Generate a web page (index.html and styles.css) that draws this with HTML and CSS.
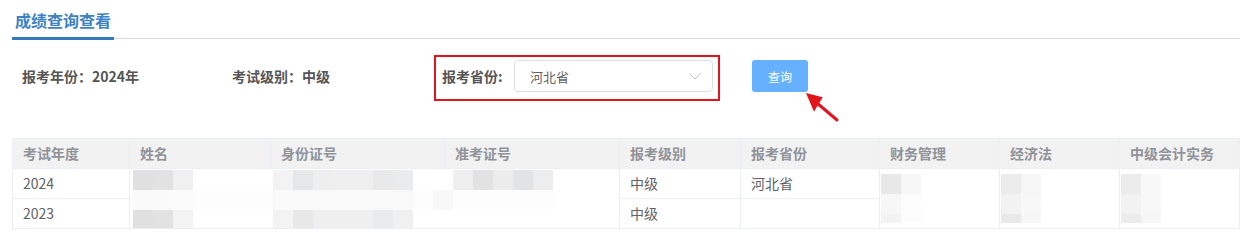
FILE: index.html
```html
<!DOCTYPE html>
<html lang="zh-CN">
<head>
<meta charset="utf-8">
<title>成绩查询查看</title>
<link rel="stylesheet" href="styles.css">
</head>
<body>
<div class="page">
  <div class="tabs"><div class="tab">成绩查询查看</div></div>

  <div class="filters">
    <div class="info info-year">报考年份：2024年</div>
    <div class="info info-level">考试级别：中级</div>
    <div class="highlight">
      <span class="label">报考省份:</span>
      <div class="select">
        <span class="select-text">河北省</span>
        <svg class="chevron" width="12" height="7" viewBox="0 0 12 7"><path d="M0.5 0.5 L6 6 L11.5 0.5" fill="none" stroke="#c0c4cc" stroke-width="1"/></svg>
      </div>
    </div>
    <div class="btn-wrap">
      <button class="btn">查询</button>
      <svg class="arrow" width="42" height="36" viewBox="0 0 42 36">
        <line x1="17" y1="15" x2="37" y2="32" stroke="#e3141c" stroke-width="3" stroke-linecap="round"/>
        <polygon points="6,5 22.7,9.3 14,23.7" fill="#e3141c"/>
      </svg>
    </div>
  </div>

  <table class="grid">
    <colgroup>
      <col class="w117"><col class="w141"><col class="w174"><col class="w175"><col class="w121"><col class="w139"><col class="w120"><col class="w120"><col class="w120">
    </colgroup>
    <thead>
      <tr>
        <th>考试年度</th><th>姓名</th><th>身份证号</th><th>准考证号</th><th>报考级别</th><th>报考省份</th><th>财务管理</th><th>经济法</th><th>中级会计实务</th>
      </tr>
    </thead>
    <tbody>
      <tr>
        <td>2024</td>
        <td class="masked" colspan="3" rowspan="2">
          <div class="mosaic-wide">
            <div class="c-e0"></div><div class="c-e1"></div><div class="c-f0"></div><div></div><div></div><div></div><div></div><div class="c-f3"></div><div class="c-e6"></div><div class="c-ee"></div><div class="c-ef"></div><div class="c-ef"></div><div class="c-e9"></div><div class="c-ea"></div><div></div><div></div><div class="c-ef"></div><div class="c-e1"></div><div class="c-ec"></div><div class="c-e2"></div><div class="c-ed"></div>
            <div class="c-fa"></div><div class="c-fa"></div><div class="c-fb"></div><div class="c-fd"></div><div class="c-fd"></div><div class="c-fd"></div><div class="c-fd"></div><div class="c-fa"></div><div class="c-f9"></div><div class="c-f9"></div><div class="c-f9"></div><div class="c-fa"></div><div class="c-f9"></div><div class="c-f9"></div><div class="c-fd"></div><div class="c-f8"></div><div class="c-fd"></div><div class="c-fd"></div><div class="c-fd"></div><div class="c-fd"></div><div class="c-fd"></div>
            <div class="c-e0"></div><div class="c-e1"></div><div class="c-f2"></div><div></div><div></div><div></div><div></div><div class="c-f3"></div><div class="c-e8"></div><div class="c-ef"></div><div class="c-ef"></div><div class="c-ef"></div><div class="c-ea"></div><div class="c-f0"></div><div></div><div></div><div></div><div></div><div></div><div></div><div></div>
          </div>
        </td>
        <td>中级</td>
        <td>河北省</td>
        <td class="masked" rowspan="2">
          <div class="mosaic-small">
            <div class="c-e8"></div><div class="c-f5"></div>
            <div class="c-f6"></div><div class="c-fc"></div>
            <div class="c-f2"></div><div class="c-fd"></div>
          </div>
        </td>
        <td class="masked" rowspan="2">
          <div class="mosaic-small">
            <div class="c-ec"></div><div class="c-f5"></div>
            <div class="c-f1"></div><div class="c-f7"></div>
            <div class="c-e9"></div><div class="c-f5"></div>
          </div>
        </td>
        <td class="masked" rowspan="2">
          <div class="mosaic-small">
            <div class="c-ec"></div><div class="c-f7"></div>
            <div class="c-f1"></div><div class="c-f8"></div>
            <div class="c-ec"></div><div class="c-f5"></div>
          </div>
        </td>
      </tr>
      <tr>
        <td>2023</td>
        <td>中级</td>
        <td></td>
      </tr>
    </tbody>
  </table>
</div>
</body>
</html>
```

FILE: styles.css
```css
* { box-sizing: border-box; }

body {
  margin: 0;
  background: #ffffff;
  font-family: "Noto Sans CJK SC", "Microsoft YaHei", "Noto Sans", sans-serif;
}

.page {
  width: 1246px;
}

/* title tab */
.tabs {
  display: flex;
  margin: 0 6px 0 12px;
  border-bottom: 1px solid #d9d9d9;
  height: 39px;
}

.tab {
  padding: 10px 3px 7px;
  height: 40px;
  margin-bottom: -2px;
  line-height: 20px;
  font-size: 16px;
  font-weight: bold;
  color: #3d82c4;
  border-bottom: 3px solid #3479bb;
}

/* filter row */
.filters {
  display: flex;
  align-items: flex-start;
  margin-top: 16px;
  padding-left: 22px;
}

.info {
  font-size: 14px;
  font-weight: bold;
  color: #555555;
  line-height: 43px;
  white-space: nowrap;
}

.info-year { width: 210px; }
.info-level { width: 202px; }

.highlight {
  display: flex;
  align-items: center;
  width: 286px;
  height: 46px;
  border: 2px solid #e3141c;
  padding: 3px 5px 7px 6px;
}

.label {
  font-size: 14px;
  font-weight: bold;
  color: #555555;
  width: 72px;
  white-space: nowrap;
}

.select {
  display: flex;
  align-items: center;
  justify-content: space-between;
  width: 199px;
  height: 32px;
  border: 1px solid #dcdfe6;
  border-radius: 4px;
  padding: 0 11px 0 15px;
}

.select-text {
  font-size: 13px;
  color: #606266;
}

.chevron { display: block; }

.btn-wrap {
  position: relative;
  margin-left: 32px;
  margin-top: 5px;
}

.btn {
  display: block;
  width: 56px;
  height: 32px;
  border: none;
  border-radius: 3px;
  background: #66b1ff;
  color: #ffffff;
  font-family: inherit;
  font-size: 12px;
  padding: 0;
}

.arrow {
  position: absolute;
  left: 48px;
  top: 28px;
}

/* table */
.grid {
  margin: 37px 0 0 12px;
  width: 1228px;
  table-layout: fixed;
  border-collapse: separate;
  border-spacing: 0;
  border-left: 1px solid #ebeef5;
  border-top: 1px solid #ebeef5;
}

.w117 { width: 117px; }
.w141 { width: 141px; }
.w174 { width: 174px; }
.w175 { width: 175px; }
.w121 { width: 121px; }
.w139 { width: 139px; }
.w120 { width: 120px; }

.grid th,
.grid td {
  padding: 0 10px;
  line-height: 29px;
  font-size: 14px;
  text-align: left;
  border-right: 1px solid #ebeef5;
  border-bottom: 1px solid #ebeef5;
  white-space: nowrap;
  overflow: hidden;
}

.grid th {
  background: #f2f2f2;
  color: #909399;
  font-weight: bold;
}

.grid td {
  color: #606266;
  font-weight: normal;
}

.grid td.masked {
  padding: 0;
  vertical-align: top;
}

.mosaic-wide {
  display: grid;
  grid-template-columns: repeat(21, 20px);
  grid-template-rows: 20px 20px 18px;
  margin: 1px 0 0 3px;
}

.mosaic-small {
  display: grid;
  grid-template-columns: 20px 20px;
  grid-template-rows: 20px 20px 9px;
  margin: 5px 0 0 1px;
}

.c-e0 { background: #e0e0e0; }
.c-e1 { background: #e1e2e1; }
.c-e2 { background: #e2e3e4; }
.c-e6 { background: #e6e7e8; }
.c-e8 { background: #e8e8e8; }
.c-e9 { background: #e9e9e9; }
.c-ea { background: #eaebec; }
.c-ec { background: #ececec; }
.c-ed { background: #ededed; }
.c-ee { background: #eeeeee; }
.c-ef { background: #efefef; }
.c-f0 { background: #f0f0f0; }
.c-f1 { background: #f1f2f1; }
.c-f2 { background: #f2f3f2; }
.c-f3 { background: #f3f3f3; }
.c-f5 { background: #f5f6f5; }
.c-f6 { background: #f6f7f6; }
.c-f7 { background: #f7f8f7; }
.c-f8 { background: #f8f8f8; }
.c-f9 { background: #f9f9f9; }
.c-fa { background: #fafafa; }
.c-fb { background: #fbfbfb; }
.c-fc { background: #fcfcfc; }
.c-fd { background: #fdfdfd; }
```
